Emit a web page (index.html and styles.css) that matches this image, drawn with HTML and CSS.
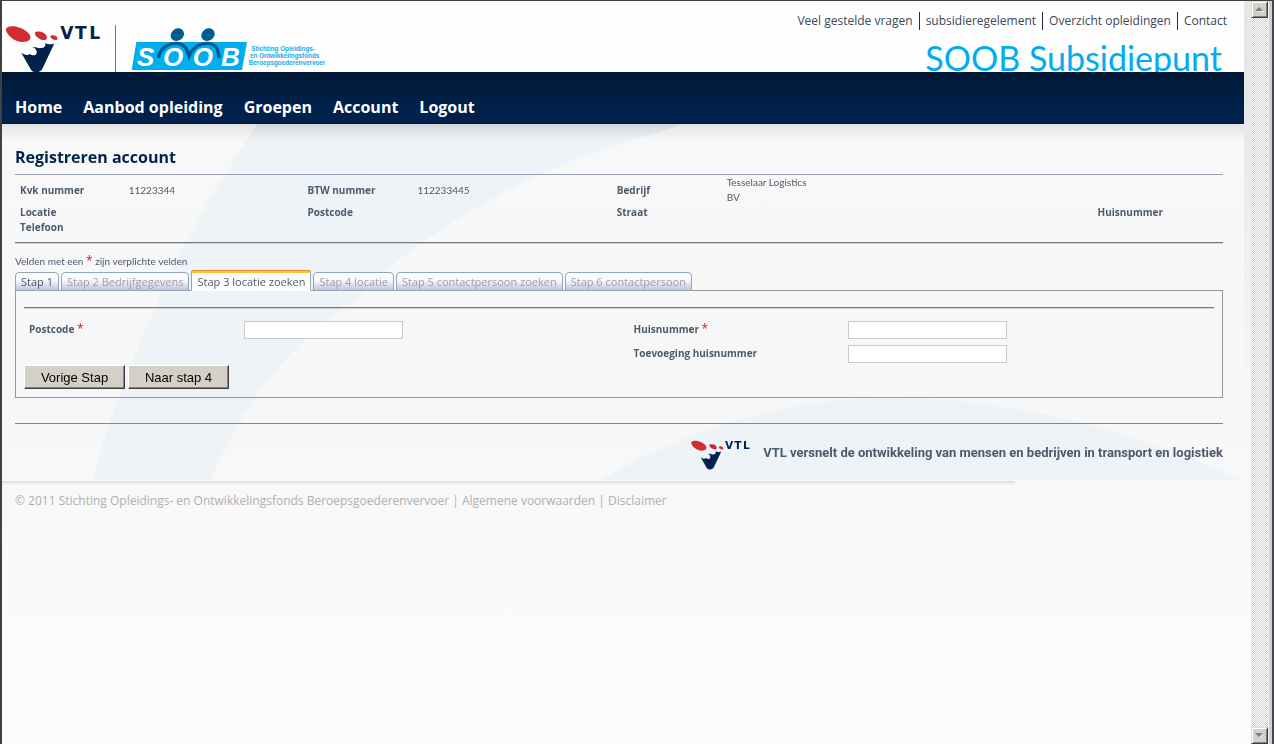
FILE: index.html
```html
<!DOCTYPE html>
<html lang="nl">
<head>
<meta charset="utf-8">
<title>SOOB Subsidiepunt</title>
<link rel="stylesheet" href="styles.css">
</head>
<body>
<svg class="defs" aria-hidden="true">
  <symbol id="vtl" viewBox="15 71 288 146">
    <path fill="#d22c33" d="M16 87C14 76 32 73 48 76C68 80 88 94 90 106C92 119 78 123 63 123C42 121 20 104 16 87Z"/>
    <path fill="#d22c33" d="M104 97C103 91 114 90 124 92C134 95 143 103 140 112C137 119 128 117 120 114C112 110 105 104 104 97Z"/>
    <path fill="#d22c33" d="M151 105C152 101 161 101 167 104C174 109 175 116 169 117C160 117 151 111 151 105Z"/>
    <path fill="#00224b" d="M62 155C71 162 81 165 89 159C97 166 109 164 109 156C111 148 105 142 97 138C106 137 115 143 124 141C134 140 139 133 134 126C143 131 153 131 163 127L127 203C121 217 100 219 92 207Z"/>
    <text class="vtl-word" x="181 226 269" y="113">VTL</text>
  </symbol>
</svg>
<div class="window">
  <div class="page">
    <div class="site">
      <header class="top">
        <div class="logos">
          <svg class="vtl-logo" role="img" aria-label="VTL"><use href="#vtl"/></svg>
          <svg class="soob-logo" viewBox="393 81 582 132" role="img" aria-label="SOOB">
            <path fill="#00adef" d="M409 126H741L726 210H395Z"/>
            <path fill="none" stroke="#005b94" stroke-width="10" d="M475 174C480 144 505 130 529 130C553 130 562 146 567 168C577 144 598 130 621 130C645 130 656 148 657 174"/>
            <ellipse fill="#005b94" cx="532" cy="104" rx="21" ry="18" transform="rotate(-35 532 104)"/>
            <ellipse fill="#005b94" cx="624" cy="104" rx="21" ry="18" transform="rotate(-35 624 104)"/>
            <text class="soob-word" x="411 489 578 663" y="197">SOOB</text>
            <text class="soob-tag" x="754" y="154">Stichting Opleidings-</text>
            <text class="soob-tag" x="750" y="174">en Ontwikkelingsfonds</text>
            <text class="soob-tag" x="746" y="195">Beroepsgoederenvervoer</text>
          </svg>
        </div>
        <div class="top-right">
          <nav class="links" aria-label="Service">
            <a href="#">Veel gestelde vragen</a><a href="#">subsidieregelement</a><a href="#">Overzicht opleidingen</a><a href="#">Contact</a>
          </nav>
          <div class="brand">SOOB Subsidiepunt</div>
        </div>
      </header>
      <nav class="menu" aria-label="Hoofdmenu">
        <a href="#">Home</a><a href="#">Aanbod opleiding</a><a href="#">Groepen</a><a href="#">Account</a><a href="#">Logout</a>
      </nav>
      <main class="main">
        <svg class="swoosh" viewBox="0 0 1242 356" preserveAspectRatio="none" aria-hidden="true">
          <path d="M255 0Q180 115 156 176Q105 290 92 355H208Q260 235 353 176Q430 95 578 33L682 0Z"/>
          <path d="M598 355Q740 273 888 273Q1060 273 1240 355Z"/>
        </svg>
        <h1>Registreren account</h1>
        <table class="info">
          <colgroup><col class="c1"><col class="c2"><col class="c3"><col class="c4"><col class="c5"><col class="c6"><col class="c7"></colgroup>
          <tr><th>Kvk nummer</th><td>11223344</td><th>BTW nummer</th><td>112233445</td><th>Bedrijf</th><td><div class="company">Tesselaar Logistics BV</div></td><td></td></tr>
          <tr><th>Locatie</th><td></td><th>Postcode</th><td></td><th>Straat</th><td></td><th>Huisnummer</th></tr>
          <tr><th>Telefoon</th><td></td><td></td><td></td><td></td><td></td><td></td></tr>
        </table>
        <p class="note">Velden met een <span class="req">*</span> zijn verplichte velden</p>
        <div class="tabs" role="tablist">
          <button class="tab" role="tab">Stap 1</button>
          <button class="tab off" role="tab">Stap 2 Bedrijfgegevens</button>
          <button class="tab active" role="tab" aria-selected="true">Stap 3 locatie zoeken</button>
          <button class="tab off" role="tab">Stap 4 locatie</button>
          <button class="tab off" role="tab">Stap 5 contactpersoon zoeken</button>
          <button class="tab off" role="tab">Stap 6 contactpersoon</button>
        </div>
        <form class="panel">
          <div class="fields">
            <div class="col">
              <div class="field"><label for="pc">Postcode <span class="req">*</span></label><input id="pc" type="text"></div>
            </div>
            <div class="col">
              <div class="field"><label for="hn">Huisnummer <span class="req">*</span></label><input id="hn" type="text"></div>
              <div class="field"><label for="tv">Toevoeging huisnummer</label><input id="tv" type="text"></div>
            </div>
          </div>
          <div class="actions">
            <button type="button">Vorige Stap</button>
            <button type="button">Naar stap 4</button>
          </div>
        </form>
        <div class="slogan">
          <svg class="vtl-small" role="img" aria-label="VTL"><use href="#vtl"/></svg>
          <strong>VTL versnelt de ontwikkeling van mensen en bedrijven in transport en logistiek</strong>
        </div>
      </main>
      <footer class="foot">© 2011 Stichting Opleidings- en Ontwikkelingsfonds Beroepsgoederenvervoer | <a href="#">Algemene voorwaarden</a> | <a href="#">Disclaimer</a></footer>
    </div>
  </div>
  <div class="scroll">
    <button class="arrow" aria-label="Omhoog"><svg viewBox="0 0 9 5"><path fill="#fff" d="M1 5H9V4Z"/><path fill="#808080" d="M4 0L8 4H0Z"/></svg></button>
    <button class="arrow" aria-label="Omlaag"><svg viewBox="0 0 9 5"><path fill="#fff" d="M9 1L5 5V4Z"/><path fill="#808080" d="M0 0H8L4 4Z"/></svg></button>
  </div>
</div>
</body>
</html>
```
FILE: styles.css
```css
* { box-sizing: border-box; }
body { margin: 0; font-family: "Open Sans", "Noto Sans", sans-serif; color: #4b5b6c; }
a { color: inherit; text-decoration: none; }
.defs { display: block; width: 0; height: 0; }

.window {
  display: flex;
  min-height: 100vh;
  border-top: 1px solid #404040;
  border-left: 2px solid #404040;
  border-right: 2px solid #45454f;
  background: linear-gradient(#f8f8f8 124px, #f7f7f7 400px, #fcfcfc);
}
.page { flex: 1; padding-right: 7px; background: linear-gradient(#e7e7e7 100px, #f7f7f700 400px) right / 7px 100% no-repeat; }

.top {
  display: flex;
  justify-content: space-between;
  height: 71px;
  overflow: hidden;
  background: repeating-linear-gradient(#fff 0 3px, #fdfdfd 3px 5px);
}
.logos { display: flex; align-items: flex-start; padding: 24px 0 0 3px; }
.vtl-logo { width: 96px; height: 48px; }
.soob-logo {
  box-sizing: content-box;
  width: 194px;
  height: 44px;
  margin-left: 14px;
  padding: 2px 0 2px 15px;
  border-left: 1px solid #707078;
}
.vtl-word { font: bold 52px "DejaVu Sans", sans-serif; fill: #00224b; }
.soob-word { font: italic bold 78px "Liberation Sans", sans-serif; fill: #fff; }
.soob-tag { font: bold 19px "Liberation Sans", sans-serif; fill: #1fa9e1; }
.top-right { display: flex; flex-direction: column; align-items: flex-end; padding: 11px 17px 0 0; }
.links { display: flex; font-size: 12px; line-height: 18px; color: #3d4654; }
.links a { padding-left: 6px; }
.links a + a { margin-left: 6px; border-left: 1px solid #222b3a; }
.brand { margin: 4px 5px 0 0; font-family: Lato, sans-serif; font-size: 34px; line-height: 48px; color: #00adef; }

.menu {
  display: flex;
  gap: 21px;
  height: 52px;
  padding: 24px 13px 0;
  background: linear-gradient(#001733, #00214b 60%, #00214b 50px, #001733);
  color: #fff;
  font-weight: bold;
  font-size: 16px;
  line-height: 22px;
}

.main {
  position: relative;
  z-index: 0;
  padding: 22px 21px 0 13px;
  background: linear-gradient(#e2e2e2, #f7f7f700) top / 100% 16px no-repeat;
}
.swoosh { position: absolute; z-index: -1; inset: 0; width: 100%; height: 100%; fill: #edf3f7; mix-blend-mode: multiply; }
h1 { margin: 0; padding-bottom: 6px; font-size: 16px; line-height: 22px; color: #00224b; }

.info {
  width: 100%;
  table-layout: fixed;
  border-collapse: separate;
  border-spacing: 0;
  border-top: 1px solid #98a1b4;
  border-bottom: 1px solid #75797c;
  box-shadow: 0 1px #d4d0cd;
  padding-bottom: 7px;
  font-size: 10px;
  line-height: 15px;
}
.info th, .info td { padding: 0 5px; text-align: left; }
.info td { font: 10px/15px Lato, sans-serif; }
.company { max-width: 86px; }
.c1 { width: 9%; }
.c2 { width: 14.8%; }
.c3 { width: 9.1%; }
.c4 { width: 16.5%; }
.c5 { width: 9.1%; }
.c6 { width: 30.7%; }
.c7 { width: 10.8%; }

.note { margin: 10px 0 0; font: 10px/16px Lato, sans-serif; }
.req { color: #f00; font: 12px/10px "Open Sans", sans-serif; }
.tabs { display: flex; align-items: flex-end; gap: 2px; height: 22px; }
.tab {
  height: 19px;
  padding: 0 5px;
  border: 1px solid #91a7b4;
  border-radius: 4px 4px 0 0;
  background: linear-gradient(#fafaff 40%, #c4c3e0);
  font: 11px/17px "Open Sans", sans-serif;
  color: #4b5b6c;
}
.tab.off { color: #a0a0a4; }
.tab.active { position: relative; height: 20px; border-top: 2px solid #ffc235; border-bottom-color: #fff; border-radius: 2px 2px 0 0; background: #fff; box-shadow: 0 -1px #e68b2c; }

.panel { margin-top: -1px; padding: 16px 8px 8px; border: 1px solid #919b9c; }
.fields { display: grid; grid-template-columns: 1fr 1fr; gap: 24px; padding: 12px 0 2px 5px; border-top: 1px solid #75797c; box-shadow: inset 0 1px #dcd0c8; }
.col { display: grid; align-content: start; gap: 5px; }
.field { display: grid; grid-template-columns: 37% 159px; align-items: center; font-weight: bold; font-size: 10px; line-height: 15px; }
.field input { width: 100%; height: 18px; border: 1px solid #c8c8c8; background: #fff; }
.col { grid-auto-rows: 19px; }
.actions { display: flex; gap: 3px; }
.actions button {
  width: 101px;
  height: 24px;
  padding: 0;
  border: 1px solid;
  border-color: #fff #404040 #404040 #fff;
  background: #d4d0c8;
  box-shadow: inset -1px -1px #808080;
  font: 13px "Liberation Sans", Arial, sans-serif;
  color: #000;
}

.slogan {
  display: flex;
  align-items: center;
  justify-content: flex-end;
  gap: 13px;
  height: 58px;
  margin-top: 25px;
  border-top: 1px solid #758aa8;
  font: 13px/18px Roboto, sans-serif;
}
.vtl-small { width: 59px; height: 30px; margin-top: 4px; }

.foot {
  padding: 11px 13px;
  background: linear-gradient(#dcdcdc, #f7f7f700) top left / 1013px 4px no-repeat;
  font-size: 12px;
  line-height: 18px;
  color: #aeb0b2;
}

.scroll {
  display: flex;
  flex-direction: column;
  justify-content: space-between;
  width: 21px;
  padding-right: 4px;
  background:
    linear-gradient(90deg, #f4f3f0 1px, #d4d0c8 1px) right / 4px 100% no-repeat,
    repeating-conic-gradient(#d4d0c8 0 25%, #fff 0 50%) 0 0 / 2px 2px;
}
.arrow {
  display: grid;
  place-items: center;
  width: 17px;
  height: 17px;
  padding: 0;
  border: 1px solid;
  border-color: #e0ddd8 #404040 #404040 #e0ddd8;
  background: #d4d0c8;
  box-shadow: inset 1px 1px #fff, inset -1px -1px #808080;
}
.arrow svg { width: 9px; height: 5px; }
```
